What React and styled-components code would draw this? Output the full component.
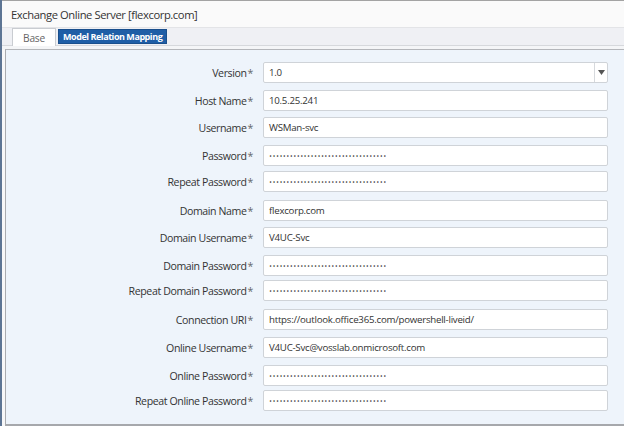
import React from "react";
import styled, { createGlobalStyle } from "styled-components";

const Global = createGlobalStyle`
  html, body { margin: 0; padding: 0; }
  body {
    width: 624px; height: 426px; overflow: hidden;
    background: #5d7594;
    font-family: "Open Sans", "Noto Sans", "DejaVu Sans", sans-serif;
  }
`;

const Dialog = styled.div`
  margin-left: 2px;
  width: 622px;
  height: 426px;
  background: #f7f7f8;
  border-top: 1px solid #a3a3a3;
  box-sizing: border-box;
  display: flex;
  flex-direction: column;
`;

const TitleBar = styled.div`
  height: 26px;
  display: flex;
  align-items: center;
  padding-left: 9px;
  background: #fafafa;
  border-bottom: 1px solid #e3e4e7;
  font-size: 11.2px;
  letter-spacing: -0.4px;
  color: #333;
`;

const TabBar = styled.div`
  height: 17px;
  display: flex;
  align-items: flex-end;
  gap: 2px;
  padding-left: 10px;
  background: #eff0f4;
  border-bottom: 1px solid #d6d8dc;
`;

const Tab = styled.div`
  box-sizing: border-box;
  height: ${(p) => (p.$active ? "15px" : "18px")};
  margin-bottom: ${(p) => (p.$active ? "1px" : "-1px")};
  padding: 0 ${(p) => (p.$active ? "4px" : "10px")};
  display: flex;
  align-items: center;
  font-size: ${(p) => (p.$active ? "9px" : "10.2px")};
  font-weight: ${(p) => (p.$active ? 700 : 400)};
  letter-spacing: ${(p) => (p.$active ? "-0.45px" : "-0.2px")};
  color: ${(p) => (p.$active ? "#fff" : "#666")};
  background: ${(p) => (p.$active ? "#1f5ea6" : "#fff")};
  border: 1px solid ${(p) => (p.$active ? "#1a4f8c" : "#c9ccd1")};
  border-bottom: ${(p) => (p.$active ? "1px solid #1a4f8c" : "none")};
`;

const Gap = styled.div`
  height: 3px;
  background: #f4f5f7;
`;

const Panel = styled.div`
  flex: 1;
  margin-left: 3px;
  background: #eef4fb;
  border-top: 1px solid #b4b6ba;
  border-left: 1px solid #a9abaf;
  border-bottom: 2px solid #a6a8ac;
  box-sizing: border-box;
  padding-top: 12px;
`;

const Form = styled.div`
  display: flex;
  flex-direction: column;
`;

const Row = styled.div`
  display: grid;
  grid-template-columns: 247px 345px;
  column-gap: 10px;
  align-items: center;
  margin-top: ${(p) => p.$gap}px;
`;

const Label = styled.label`
  text-align: right;
  font-size: 10.6px;
  color: #333;
  letter-spacing: -0.4px;
  white-space: nowrap;
`;

const Star = styled.span`
  color: #666;
  margin-left: 1px;
`;

const Field = styled.div`
  box-sizing: border-box;
  height: 21px;
  display: flex;
  align-items: center;
  background: #fff;
  border: 1px solid #cfd3d8;
  border-radius: 2px;
  font-size: 9.7px;
  letter-spacing: -0.25px;
  color: #333;
  padding-left: 5px;
  padding-right: ${(p) => (p.$select ? "0" : "5px")};
  overflow: hidden;
  white-space: nowrap;
`;

const Dots = styled.span`
  font-family: "DejaVu Sans", sans-serif;
  font-size: 5.2px;
  letter-spacing: 0.4px;
  color: #222;
`;

const SelectText = styled.span`
  flex: 1;
`;

const Arrow = styled.div`
  width: 12px;
  height: 100%;
  border-left: 1px solid #d6d9dd;
  display: flex;
  align-items: center;
  justify-content: center;
`;

const rows = [
  { label: "Version", value: "1.0", select: true, gap: 0 },
  { label: "Host Name", value: "10.5.25.241", gap: 7 },
  { label: "Username", value: "WSMan-svc", gap: 6 },
  { label: "Password", pw: true, gap: 7 },
  { label: "Repeat Password", pw: true, gap: 5 },
  { label: "Domain Name", value: "flexcorp.com", gap: 8 },
  { label: "Domain Username", value: "V4UC-Svc", gap: 6 },
  { label: "Domain Password", pw: true, gap: 7 },
  { label: "Repeat Domain Password", pw: true, gap: 4 },
  { label: "Connection URI", value: "https://outlook.office365.com/powershell-liveid/", gap: 8 },
  { label: "Online Username", value: "V4UC-Svc@vosslab.onmicrosoft.com", gap: 7 },
  { label: "Online Password", pw: true, gap: 7 },
  { label: "Repeat Online Password", pw: true, gap: 4 },
];

const DOTS = "•".repeat(34);

export default function App() {
  return (
    <>
      <Global />
      <Dialog>
        <TitleBar>Exchange Online Server [flexcorp.com]</TitleBar>
        <TabBar>
          <Tab>Base</Tab>
          <Tab $active>Model Relation Mapping</Tab>
        </TabBar>
        <Gap />
        <Panel>
          <Form>
            {rows.map((r) => (
              <Row key={r.label} $gap={r.gap}>
                <Label>
                  {r.label}
                  <Star>*</Star>
                </Label>
                <Field $select={r.select}>
                  {r.select ? (
                    <>
                      <SelectText>{r.value}</SelectText>
                      <Arrow>
                        <svg width="7" height="5" viewBox="0 0 7 5">
                          <path d="M0 0h7L3.5 5z" fill="#555" />
                        </svg>
                      </Arrow>
                    </>
                  ) : r.pw ? (
                    <Dots>{DOTS}</Dots>
                  ) : (
                    r.value
                  )}
                </Field>
              </Row>
            ))}
          </Form>
        </Panel>
      </Dialog>
    </>
  );
}
